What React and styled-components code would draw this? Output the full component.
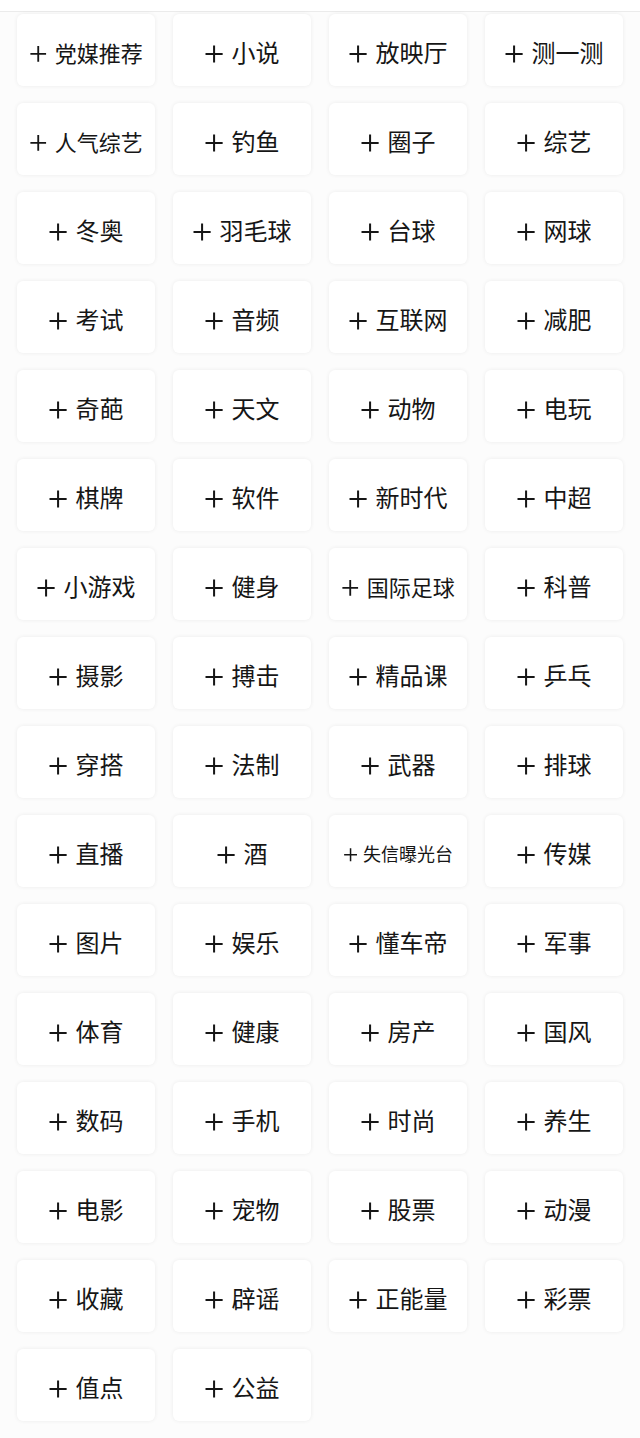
import styled, { createGlobalStyle } from 'styled-components';

const channels = [
  '党媒推荐', '小说', '放映厅', '测一测',
  '人气综艺', '钓鱼', '圈子', '综艺',
  '冬奥', '羽毛球', '台球', '网球',
  '考试', '音频', '互联网', '减肥',
  '奇葩', '天文', '动物', '电玩',
  '棋牌', '软件', '新时代', '中超',
  '小游戏', '健身', '国际足球', '科普',
  '摄影', '搏击', '精品课', '乒乓',
  '穿搭', '法制', '武器', '排球',
  '直播', '酒', '失信曝光台', '传媒',
  '图片', '娱乐', '懂车帝', '军事',
  '体育', '健康', '房产', '国风',
  '数码', '手机', '时尚', '养生',
  '电影', '宠物', '股票', '动漫',
  '收藏', '辟谣', '正能量', '彩票',
  '值点', '公益',
];

// longer names shrink so they still fit the card
const sizeFor = (name) => {
  if (name.length >= 5) return 18;
  if (name.length === 4) return 22;
  return 24;
};

export default function App() {
  return (
    <>
      <GlobalStyle />
      <Page>
        <TopBar />
        <Grid>
          {channels.map((name) => (
            <Card key={name}>
              <Label size={sizeFor(name)}>
                <PlusIcon />
                <span>{name}</span>
              </Label>
            </Card>
          ))}
        </Grid>
      </Page>
    </>
  );
}

function PlusIcon() {
  return (
    <Plus viewBox="0 0 20 20" aria-hidden="true">
      <path d="M10 1.5v17M1.5 10h17" stroke="currentColor" strokeWidth="2" fill="none" />
    </Plus>
  );
}

const GlobalStyle = createGlobalStyle`
  html, body {
    margin: 0;
    padding: 0;
    background: #fcfcfc;
  }
  body {
    font-family: "Noto Sans CJK SC", "Noto Sans", sans-serif;
    color: #161616;
  }
`;

const Page = styled.div`
  width: 640px;
  min-height: 1438px;
  background: #fcfcfc;
`;

const TopBar = styled.div`
  height: 11px;
  background: #ffffff;
  border-bottom: 1px solid #ebebeb;
`;

const Grid = styled.div`
  display: grid;
  grid-template-columns: repeat(4, 138px);
  grid-auto-rows: 72px;
  column-gap: 18px;
  row-gap: 17px;
  padding: 2px 17px 0;
`;

const Card = styled.div`
  background: #ffffff;
  border-radius: 6px;
  box-shadow: 0 0 4px rgba(0, 0, 0, 0.07);
  display: flex;
  align-items: center;
  justify-content: center;
`;

const Label = styled.div`
  display: flex;
  align-items: center;
  gap: ${(p) => Math.round(p.size * 0.3)}px;
  font-size: ${(p) => p.size}px;
  line-height: 1;
  white-space: nowrap;
  padding-top: 3px;
`;

const Plus = styled.svg`
  width: 0.84em;
  height: 0.84em;
  flex-shrink: 0;
  transform: translateY(0.12em);
`;
